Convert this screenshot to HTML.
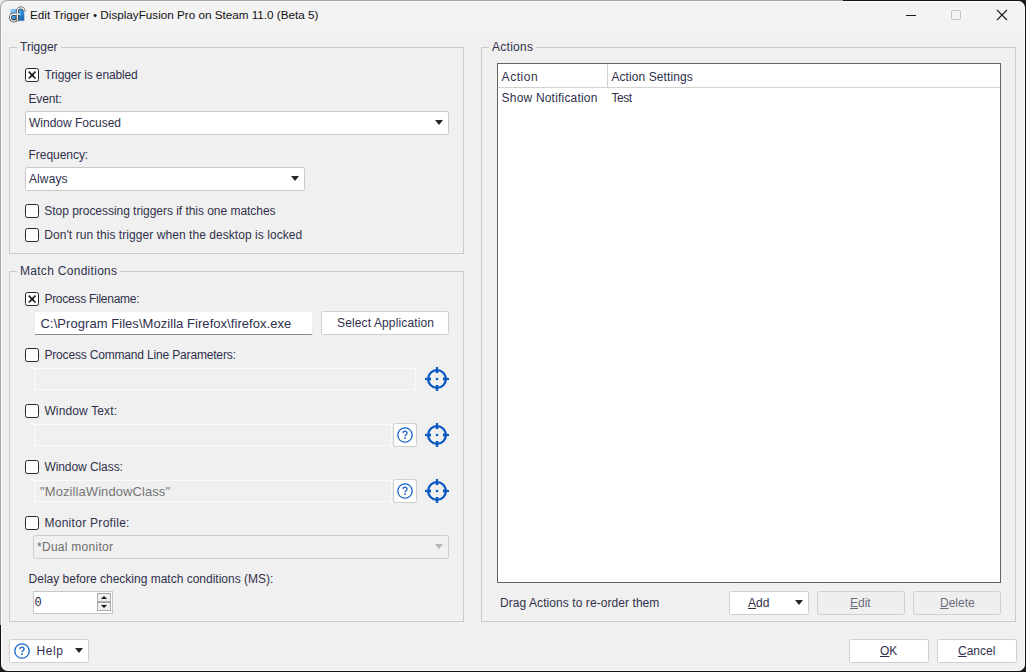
<!DOCTYPE html>
<html><head><meta charset="utf-8">
<style>
*{box-sizing:border-box;margin:0;padding:0}
html,body{width:1026px;height:672px;overflow:hidden;background:#1c1c1c}
body{position:relative;font-family:"Liberation Sans",sans-serif;font-size:12px;color:#30304c}
#bgl{position:absolute;left:0;top:0;width:843px;height:625px;background:#e6e6e6}
#win{position:absolute;left:0;top:0;width:1026px;height:672px;background:#f0f0f0;background-clip:padding-box;border:1px solid rgba(0,0,0,0.28);border-radius:8px;overflow:hidden;box-shadow:inset 0 0 0 1px #fbfbfb}
#tb{position:absolute;left:1px;top:1px;width:1022px;height:30px;background:#f3f3f3;border-radius:7px 7px 0 0}
.a{position:absolute}
.t{position:absolute;white-space:nowrap;font-size:12px;line-height:14px}
.gb{position:absolute;border:1px solid #cbcbcb}
.gl{position:absolute;background:#f0f0f0;padding:0 3px;line-height:14px;white-space:nowrap}
.cb{position:absolute;width:14px;height:14px;border:1.4px solid #262626;border-radius:2.5px;background:#fff}
.cbx{position:absolute;left:1.5px;top:1.5px}
.combo{position:absolute;height:24px;background:#fff;border:1px solid #c9c9c9;border-radius:2.5px}
.tri{position:absolute;width:0;height:0;border-left:4px solid transparent;border-right:4px solid transparent;border-top:5px solid #262626}
.btn{position:absolute;height:24px;background:#fff;border:1px solid #cfcfcf;border-radius:2.5px}
.dis{position:absolute;height:22px;background:#f0f0f0;border:1px solid #fbfbfb}
u{text-decoration:underline;text-underline-offset:1px;text-decoration-thickness:1px}
</style></head><body>
<div id="bgl"></div>
<div id="win">
  <div id="tb"></div>
</div>

<!-- title -->
<svg class="a" style="left:8px;top:5px" width="20" height="20" viewBox="0 0 20 20">
  <defs><linearGradient id="gbl" x1="0" y1="0" x2="1" y2="1"><stop offset="0" stop-color="#a6dcf8"/><stop offset="0.45" stop-color="#3c9be0"/><stop offset="1" stop-color="#0a4f9c"/></linearGradient></defs>
  <rect x="2.3" y="3.9" width="14.1" height="12.1" fill="url(#gbl)"/>
  <path d="M16.4 3.9 V16 H2.3" fill="none" stroke="#c9d6e0" stroke-width="0.8"/>
  <circle cx="5.9" cy="12.6" r="3.5" fill="none" stroke="#3a3a3a" stroke-width="2.7"/>
  <circle cx="5.9" cy="12.6" r="3.5" fill="none" stroke="#fff" stroke-width="1.2"/>
  <path d="M9.3 16.2 V6.4 A3.4 3.4 0 0 1 16.2 6.4" fill="none" stroke="#3a3a3a" stroke-width="2.7"/>
  <path d="M9.3 16.2 V6.4 A3.4 3.4 0 0 1 16.2 6.4" fill="none" stroke="#fff" stroke-width="1.2"/>
  <path d="M5.5 9.1 H12.5" fill="none" stroke="#fff" stroke-width="1.1"/>
</svg>
<div class="t" style="left:30px;top:7.8px;font-size:11.7px;color:#111">Edit Trigger • DisplayFusion Pro on Steam 11.0 (Beta 5)</div>
<!-- window controls -->
<div class="a" style="left:906px;top:15px;width:10px;height:1px;background:#1a1a1a"></div>
<div class="a" style="left:951px;top:10px;width:10px;height:10px;border:1px solid #c4c4c4;border-radius:1.5px"></div>
<svg class="a" style="left:996px;top:9px" width="12" height="12" viewBox="0 0 12 12"><path d="M1 1 L11 11 M11 1 L1 11" stroke="#1a1a1a" stroke-width="1.1"/></svg>

<!-- Trigger group -->
<div class="gb" style="left:9px;top:47px;width:455px;height:207px"></div>
<div class="gl t" style="left:17px;top:39.7px">Trigger</div>
<div class="cb" style="left:25px;top:68px"><svg class="cbx" width="12" height="12" viewBox="0 0 12 12" style="left:0;top:0"><path d="M2.7 2.7 L9.5 9.5 M9.5 2.7 L2.7 9.5" stroke="#262626" stroke-width="1.7"/><rect x="4.7" y="4.7" width="3" height="3" fill="#262626"/></svg></div>
<div class="t" style="letter-spacing:-0.14px;left:44.5px;top:67.7px">Trigger is enabled</div>
<div class="t" style="letter-spacing:-0.16px;left:28.5px;top:91.7px">Event:</div>
<div class="combo" style="left:25px;top:111px;width:424px"></div>
<div class="t" style="left:29px;top:115.7px">Window Focused</div>
<div class="tri" style="left:435px;top:120px"></div>
<div class="t" style="letter-spacing:-0.04px;left:28.5px;top:147.7px">Frequency:</div>
<div class="combo" style="left:25px;top:167px;width:280px"></div>
<div class="t" style="letter-spacing:0.1px;left:29px;top:171.9px">Always</div>
<div class="tri" style="left:291px;top:176px"></div>
<div class="cb" style="left:25px;top:204px"></div>
<div class="t" style="letter-spacing:-0.035px;left:44.3px;top:204px">Stop processing triggers if this one matches</div>
<div class="cb" style="left:25px;top:228px"></div>
<div class="t" style="letter-spacing:0.06px;left:44.3px;top:227.9px">Don't run this trigger when the desktop is locked</div>

<!-- Match Conditions group -->
<div class="gb" style="left:9px;top:271px;width:455px;height:351px"></div>
<div class="gl t" style="letter-spacing:0.29px;left:17px;top:263.6px">Match Conditions</div>
<div class="cb" style="left:25px;top:292px"><svg class="cbx" width="12" height="12" viewBox="0 0 12 12" style="left:0;top:0"><path d="M2.7 2.7 L9.5 9.5 M9.5 2.7 L2.7 9.5" stroke="#262626" stroke-width="1.7"/><rect x="4.7" y="4.7" width="3" height="3" fill="#262626"/></svg></div>
<div class="t" style="letter-spacing:-0.26px;left:44.4px;top:291.9px">Process Filename:</div>
<div class="a" style="left:34px;top:311px;width:279px;height:24px;background:#fff;border:1px solid #ececec;border-bottom:1px solid #8a8a8a;border-radius:2px"></div>
<div class="t" style="letter-spacing:0.05px;left:40.6px;top:316.3px;font-size:13px;line-height:15px">C:\Program Files\Mozilla Firefox\firefox.exe</div>
<div class="btn" style="left:321px;top:311px;width:128px"></div>
<div class="t" style="letter-spacing:0.13px;left:337px;top:315.8px">Select Application</div>

<div class="cb" style="left:25px;top:348px"></div>
<div class="t" style="letter-spacing:-0.17px;left:44.4px;top:347.7px">Process Command Line Parameters:</div>
<div class="dis" style="left:34px;top:368px;width:382px"></div>
<svg class="a tgt" style="left:425px;top:367px" width="24" height="24" viewBox="0 0 24 24"><circle cx="12" cy="12" r="8.9" fill="none" stroke="#0858c0" stroke-width="2.3"/><path d="M10.9 0 H13.1 L13.4 6 H10.6 Z M10.9 24 H13.1 L13.4 18 H10.6 Z M0 10.9 V13.1 L6 13.4 V10.6 Z M24 10.9 V13.1 L18 13.4 V10.6 Z" fill="#0858c0"/><circle cx="12" cy="12" r="1.35" fill="#0858c0"/></svg>

<div class="cb" style="left:25px;top:404px"></div>
<div class="t" style="letter-spacing:0.14px;left:44.4px;top:403.7px">Window Text:</div>
<div class="dis" style="left:34px;top:424px;width:358px"></div>
<div class="btn" style="left:393px;top:423px;width:24px"></div>
<svg class="a" style="left:397px;top:427px" width="16" height="16" viewBox="0 0 16 16"><circle cx="8" cy="8" r="7.2" fill="none" stroke="#1466c8" stroke-width="1.3"/><path d="M6 6.1 A2.05 1.9 0 1 1 9 7.7 C8.2 8.2 8 8.4 8 9.2" fill="none" stroke="#1466c8" stroke-width="1.35"/><rect x="7.2" y="10.3" width="1.6" height="1.6" fill="#1466c8"/></svg>
<svg class="a tgt" style="left:425px;top:423px" width="24" height="24" viewBox="0 0 24 24"><circle cx="12" cy="12" r="8.9" fill="none" stroke="#0858c0" stroke-width="2.3"/><path d="M10.9 0 H13.1 L13.4 6 H10.6 Z M10.9 24 H13.1 L13.4 18 H10.6 Z M0 10.9 V13.1 L6 13.4 V10.6 Z M24 10.9 V13.1 L18 13.4 V10.6 Z" fill="#0858c0"/><circle cx="12" cy="12" r="1.35" fill="#0858c0"/></svg>

<div class="cb" style="left:25px;top:460px"></div>
<div class="t" style="letter-spacing:-0.07px;left:44.4px;top:459.7px">Window Class:</div>
<div class="dis" style="left:34px;top:480px;width:358px"></div>
<div class="t" style="letter-spacing:0.08px;left:40.1px;top:483.6px;font-size:13px;line-height:15px;color:#767676">"MozillaWindowClass"</div>
<div class="btn" style="left:393px;top:479px;width:24px"></div>
<svg class="a" style="left:397px;top:483px" width="16" height="16" viewBox="0 0 16 16"><circle cx="8" cy="8" r="7.2" fill="none" stroke="#1466c8" stroke-width="1.3"/><path d="M6 6.1 A2.05 1.9 0 1 1 9 7.7 C8.2 8.2 8 8.4 8 9.2" fill="none" stroke="#1466c8" stroke-width="1.35"/><rect x="7.2" y="10.3" width="1.6" height="1.6" fill="#1466c8"/></svg>
<svg class="a tgt" style="left:425px;top:479px" width="24" height="24" viewBox="0 0 24 24"><circle cx="12" cy="12" r="8.9" fill="none" stroke="#0858c0" stroke-width="2.3"/><path d="M10.9 0 H13.1 L13.4 6 H10.6 Z M10.9 24 H13.1 L13.4 18 H10.6 Z M0 10.9 V13.1 L6 13.4 V10.6 Z M24 10.9 V13.1 L18 13.4 V10.6 Z" fill="#0858c0"/><circle cx="12" cy="12" r="1.35" fill="#0858c0"/></svg>

<div class="cb" style="left:25px;top:516px"></div>
<div class="t" style="letter-spacing:0.29px;left:44.4px;top:515.7px">Monitor Profile:</div>
<div class="combo" style="left:33px;top:535px;width:416px;background:#f0f0f0;border-color:#cccccc"></div>
<div class="t" style="letter-spacing:0.27px;left:37px;top:540px;color:#6d6d6d">*Dual monitor</div>
<div class="tri" style="left:435px;top:544px;border-top-color:#b4b4b4"></div>

<div class="t" style="left:28.6px;top:571.7px">Delay before checking match conditions (MS):</div>
<div class="a" style="left:33px;top:591px;width:80px;height:23px;background:#fff;border:1px solid #c6c6c6"></div>
<div class="t" style="left:34.5px;top:596px;font-family:'Liberation Mono',monospace;font-size:12px;color:#22223f">0</div>
<div class="a" style="left:97px;top:593px;width:14px;height:9px;background:#efefef;border:1px solid #aaaaaa"></div>
<div class="a" style="left:97px;top:602px;width:14px;height:9px;background:#efefef;border:1px solid #aaaaaa"></div>
<div class="a" style="left:101px;top:595.5px;width:0;height:0;border-left:3px solid transparent;border-right:3px solid transparent;border-bottom:3.5px solid #111"></div>
<div class="a" style="left:101px;top:604.5px;width:0;height:0;border-left:3px solid transparent;border-right:3px solid transparent;border-top:3.5px solid #111"></div>

<!-- Actions group -->
<div class="gb" style="left:481px;top:47px;width:535px;height:575px"></div>
<div class="gl t" style="letter-spacing:0.28px;left:489px;top:39.8px">Actions</div>
<div class="a" style="left:497px;top:63px;width:504px;height:520px;background:#fff;border:1px solid #646464"></div>
<div class="a" style="left:498px;top:87px;width:502px;height:1px;background:#d2d2d2"></div>
<div class="a" style="left:607px;top:64px;width:1px;height:23px;background:#d2d2d2"></div>
<div class="t" style="letter-spacing:0.55px;left:501.6px;top:69.6px">Action</div>
<div class="t" style="letter-spacing:0.09px;left:611.4px;top:69.6px">Action Settings</div>
<div class="t" style="letter-spacing:0.19px;left:501.6px;top:90.7px">Show Notification</div>
<div class="t" style="letter-spacing:-0.43px;left:611.4px;top:90.7px">Test</div>

<div class="t" style="letter-spacing:0.07px;left:500px;top:596px">Drag Actions to re-order them</div>
<div class="btn" style="left:729px;top:591px;width:80px"></div>
<div class="t" style="left:748px;top:596px"><u>A</u>dd</div>
<div class="tri" style="left:795px;top:600px"></div>
<div class="btn" style="left:817px;top:591px;width:88px;background:#efefef;border-color:#d0d0d0"></div>
<div class="t" style="left:850px;top:596px;color:#6d6d80"><u>E</u>dit</div>
<div class="btn" style="left:913px;top:591px;width:88px;background:#efefef;border-color:#d0d0d0"></div>
<div class="t" style="left:940px;top:596px;color:#6d6d80"><u>D</u>elete</div>

<!-- bottom -->
<div class="btn" style="left:9px;top:639px;width:80px"></div>
<svg class="a" style="left:14px;top:643px" width="16" height="16" viewBox="0 0 16 16"><circle cx="8" cy="8" r="7.2" fill="none" stroke="#1466c8" stroke-width="1.3"/><path d="M6 6.1 A2.05 1.9 0 1 1 9 7.7 C8.2 8.2 8 8.4 8 9.2" fill="none" stroke="#1466c8" stroke-width="1.35"/><rect x="7.2" y="10.3" width="1.6" height="1.6" fill="#1466c8"/></svg>
<div class="t" style="left:36.5px;top:643.6px;letter-spacing:0.6px">Help</div>
<div class="tri" style="left:75px;top:648px"></div>
<div class="btn" style="left:849px;top:639px;width:80px"></div>
<div class="t" style="left:880px;top:644px"><u>O</u>K</div>
<div class="btn" style="left:937px;top:639px;width:80px"></div>
<div class="t" style="left:958px;top:644px"><u>C</u>ancel</div>
</body></html>
